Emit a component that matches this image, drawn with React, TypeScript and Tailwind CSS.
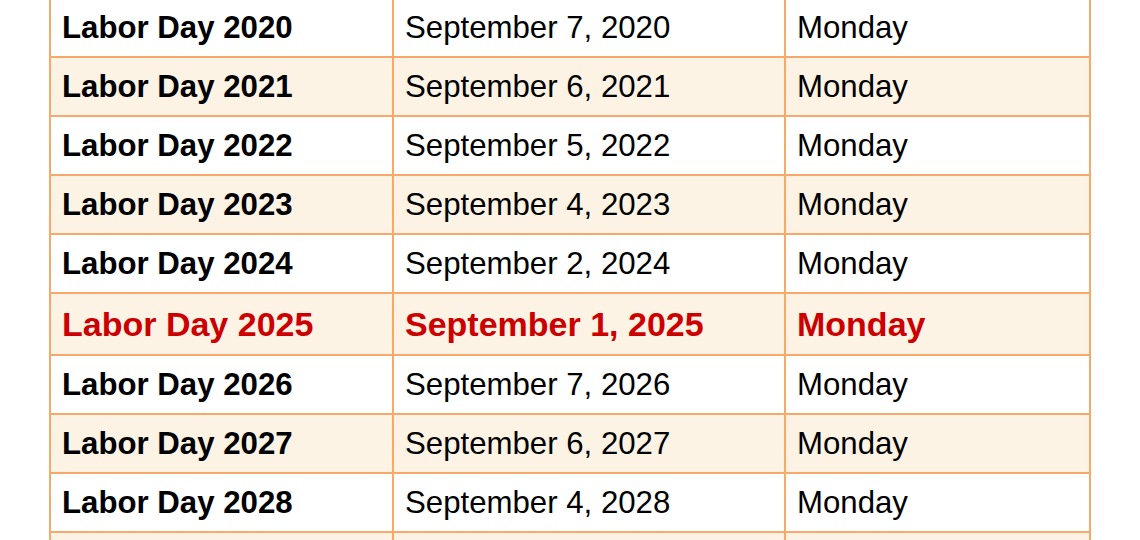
import React from 'react';

type Row = { year: number; date: string; day: string };

const rows: Row[] = [
  { year: 2020, date: 'September 7, 2020', day: 'Monday' },
  { year: 2021, date: 'September 6, 2021', day: 'Monday' },
  { year: 2022, date: 'September 5, 2022', day: 'Monday' },
  { year: 2023, date: 'September 4, 2023', day: 'Monday' },
  { year: 2024, date: 'September 2, 2024', day: 'Monday' },
  { year: 2025, date: 'September 1, 2025', day: 'Monday' },
  { year: 2026, date: 'September 7, 2026', day: 'Monday' },
  { year: 2027, date: 'September 6, 2027', day: 'Monday' },
  { year: 2028, date: 'September 4, 2028', day: 'Monday' },
  { year: 2029, date: 'September 3, 2029', day: 'Monday' },
];

export default function App() {
  return (
    <div
      className="w-[1140px] h-[540px] overflow-hidden bg-white"
      style={{ fontFamily: '"Liberation Sans", Arial, sans-serif' }}
    >
      <table className="ml-[49px] mt-[-3px] w-[1040px] border-collapse table-fixed">
        <colgroup>
          <col className="w-[343px]" />
          <col className="w-[392px]" />
          <col className="w-[305px]" />
        </colgroup>
        <tbody>
          {rows.map((r, i) => {
            const current = r.year === 2025;
            const bg = i % 2 === 1 ? 'bg-[#fdf3e4]' : 'bg-white';
            const cell = 'border-2 border-[#f8a86a] pl-[11px] align-middle leading-none';
            const size = current
              ? 'h-[62px] text-[34px] font-bold text-[#cc0000]'
              : 'h-[59px] text-[31.2px] text-black';
            return (
              <tr key={r.year} className={bg}>
                <td className={`${cell} ${size} font-bold`}>Labor Day {r.year}</td>
                <td className={`${cell} ${size}`}>{r.date}</td>
                <td className={`${cell} ${size}`}>{r.day}</td>
              </tr>
            );
          })}
        </tbody>
      </table>
    </div>
  );
}
